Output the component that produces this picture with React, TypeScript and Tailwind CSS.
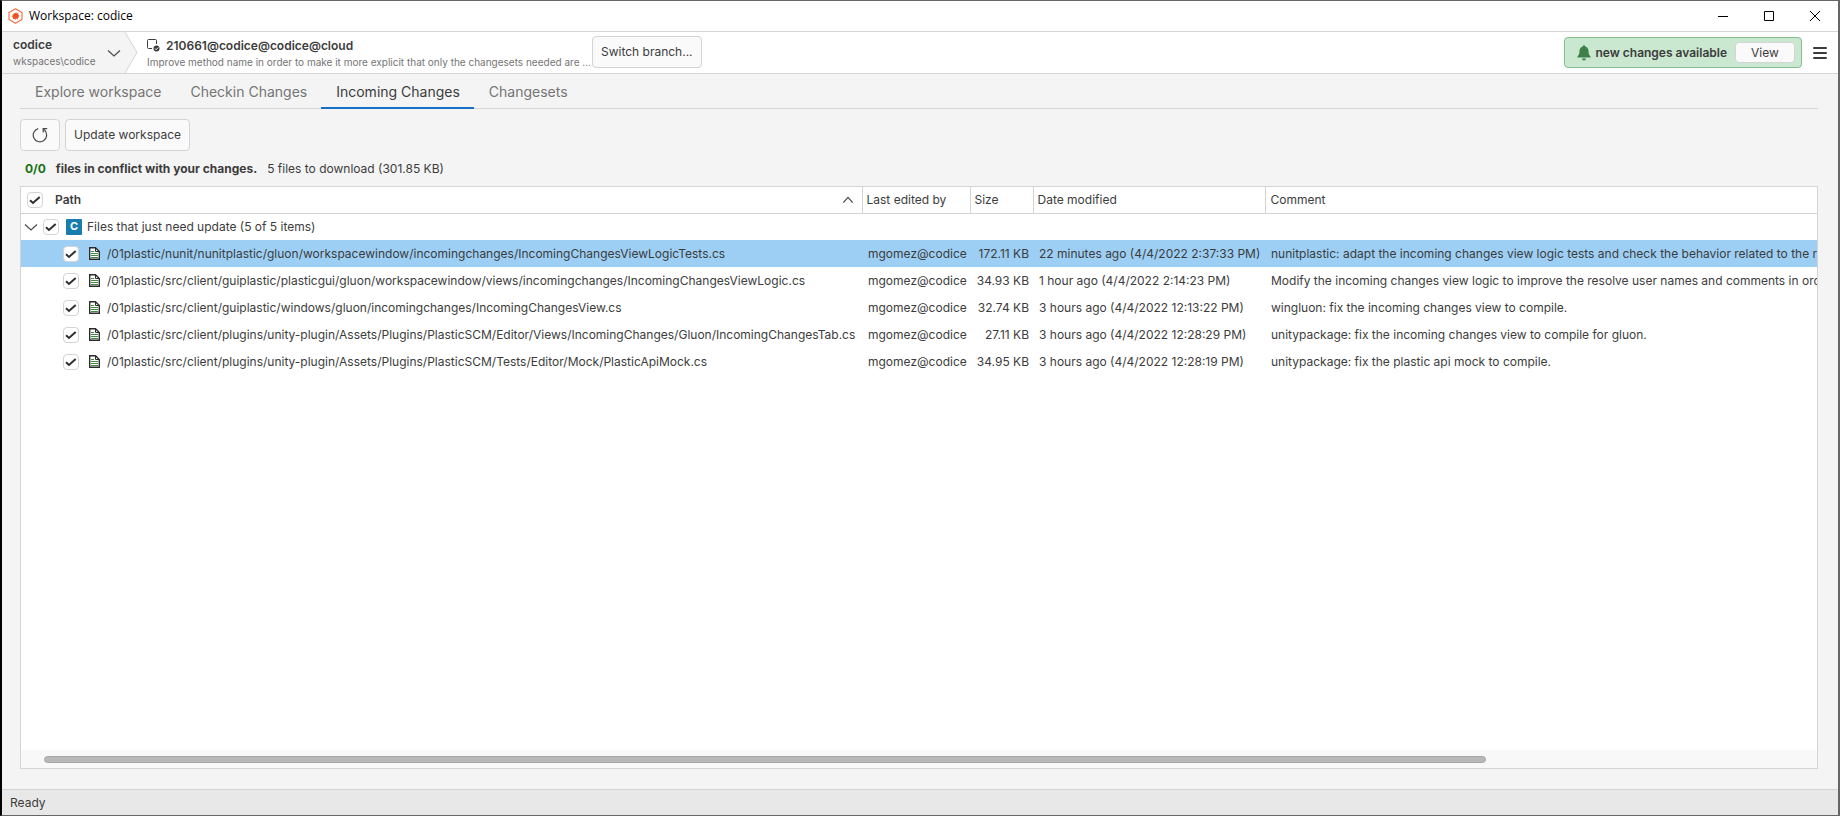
import { ReactNode } from 'react'
import clsx from 'clsx'

const TABS = ['Explore workspace', 'Checkin Changes', 'Incoming Changes', 'Changesets']

const FILES = [
  {
    path: '/01plastic/nunit/nunitplastic/gluon/workspacewindow/incomingchanges/IncomingChangesViewLogicTests.cs',
    author: 'mgomez@codice',
    size: '172.11 KB',
    date: '22 minutes ago (4/4/2022 2:37:33 PM)',
    comment: 'nunitplastic: adapt the incoming changes view logic tests and check the behavior related to the r',
  },
  {
    path: '/01plastic/src/client/guiplastic/plasticgui/gluon/workspacewindow/views/incomingchanges/IncomingChangesViewLogic.cs',
    author: 'mgomez@codice',
    size: '34.93 KB',
    date: '1 hour ago (4/4/2022 2:14:23 PM)',
    comment: 'Modify the incoming changes view logic to improve the resolve user names and comments in ord',
  },
  {
    path: '/01plastic/src/client/guiplastic/windows/gluon/incomingchanges/IncomingChangesView.cs',
    author: 'mgomez@codice',
    size: '32.74 KB',
    date: '3 hours ago (4/4/2022 12:13:22 PM)',
    comment: 'wingluon: fix the incoming changes view to compile.',
  },
  {
    path: '/01plastic/src/client/plugins/unity-plugin/Assets/Plugins/PlasticSCM/Editor/Views/IncomingChanges/Gluon/IncomingChangesTab.cs',
    author: 'mgomez@codice',
    size: '27.11 KB',
    date: '3 hours ago (4/4/2022 12:28:29 PM)',
    comment: 'unitypackage: fix the incoming changes view to compile for gluon.',
  },
  {
    path: '/01plastic/src/client/plugins/unity-plugin/Assets/Plugins/PlasticSCM/Tests/Editor/Mock/PlasticApiMock.cs',
    author: 'mgomez@codice',
    size: '34.95 KB',
    date: '3 hours ago (4/4/2022 12:28:19 PM)',
    comment: 'unitypackage: fix the plastic api mock to compile.',
  },
]

const Logo = () => (
  <svg width="15" height="16" viewBox="0 0 15 16" className="shrink-0">
    <path
      d="M7.5.8l6.500 3.600v7.200L7.500 15.200 1 11.600V4.400z"
      fill="#fff"
      stroke="#f4683f"
      strokeWidth="1.1"
      strokeLinejoin="round"
    />
    <path
      d="M8.200 3.900l.3 1.700 2-.9-.6 1.800 1.700.5-1.300 1 1.100 1.400-1.600.2.2 1.800-1.700-.9-.9 1.400-.8-1.500-1.800.9.3-1.800-1.500-.6 1.300-1-.9-1.400 1.600.1.100-1.700 1.400.7z"
      fill="#f1501f"
    />
  </svg>
)

const Chevron = ({ up = false }: { up?: boolean }) => (
  <svg
    width={up ? 12 : 14}
    height={up ? 12 : 14}
    viewBox="0 0 14 14"
    fill="none"
    stroke="#4a4a4a"
    strokeWidth={up ? 1.5 : 1.2}
    className="shrink-0"
  >
    {up ? <path d="M1.500 10l5.500-6 5.500 6" /> : <path d="M1 4.500l6 5.500 6-5.500" />}
  </svg>
)

const ChangesetIcon = () => (
  <svg width="13" height="13" viewBox="0 0 13 13" fill="none" className="shrink-0">
    <path d="M9.500 5V1.500a1 1 0 0 0-1-1h-7a1 1 0 0 0-1 1v7a1 1 0 0 0 1 1H5" stroke="#3c3c3c" />
    <circle cx="9.500" cy="9.500" r="3" fill="#3c3c3c" />
    <path d="M8 9.500l1.200 1.200 2-2.200" stroke="#fff" />
  </svg>
)

const BellIcon = () => (
  <svg width="14" height="16" viewBox="0 0 14 16" fill="#3f8049" className="shrink-0">
    <path d="M7 .3c.8 0 1.100.5 1.100 1.100 2.200.5 3.300 2.300 3.400 4.400.1 3 .6 4.300 1.900 5.400.5.5.2 1.300-.5 1.300H1.100c-.7 0-1-.8-.5-1.300C1.900 10.100 2.400 8.800 2.500 5.800 2.600 3.700 3.700 1.900 5.900 1.400 5.900.8 6.200.3 7 .3zM5 13.400h4c0 1.200-.9 2-2 2s-2-.8-2-2z" />
  </svg>
)

const RefreshIcon = () => (
  <svg width="16" height="16" viewBox="0 0 16 16" fill="none" stroke="#4a4a4a" strokeWidth="1.200">
    <path d="M6.200 1.600A6.700 6.700 0 1 0 13 3.700" />
    <path d="M11.200 5.500V1.600h4" />
    <path d="M11.200 1.600l2.300 2.600" />
  </svg>
)

const FileIcon = () => (
  <svg width="11" height="13" viewBox="0 0 11 13" fill="none" className="shrink-0">
    <path d="M.7.700h5.800l3.800 3.800v7.800H.700z" fill="#fff" stroke="#2b2b2b" strokeWidth="1.400" />
    <path d="M6.500 1v3.500H10" stroke="#2b2b2b" />
    <path d="M2 4.500h3M2 6.500h7M2 8.500h7M2 10.500h7" stroke="#3f8a43" />
  </svg>
)

const Checkbox = ({ label }: { label: string }) => (
  <span className="inline-grid shrink-0">
    <input
      type="checkbox"
      defaultChecked
      aria-label={label}
      className="peer col-start-1 row-start-1 size-4 appearance-none rounded border border-[#d4d4d4] bg-white"
    />
    <svg
      viewBox="0 0 16 16"
      fill="none"
      stroke="#2f2f2f"
      strokeWidth="2"
      className="pointer-events-none invisible col-start-1 row-start-1 size-4 peer-checked:visible"
    >
      <path d="M3 8.200l3 2.800L12.700 5" />
    </svg>
  </span>
)

const Button = ({ children, className, label }: { children: ReactNode; className: string; label?: string }) => (
  <button
    type="button"
    aria-label={label}
    className={clsx('flex shrink-0 items-center justify-center border border-[#d4d4d4] bg-[#fafafa]', className)}
  >
    {children}
  </button>
)

const TitleBar = () => (
  <div className="flex h-[31px] shrink-0 items-center border-b border-[#d4d4d4] bg-white pl-1.5">
    <Logo />
    <h1 className="ml-1.5 flex-1 font-['Open_Sans',sans-serif] text-xs text-black">Workspace: codice</h1>
    <button type="button" aria-label="Minimize" className="flex w-[46px] justify-center">
      <svg width="10" height="10" stroke="#000">
        <path d="M0 5.500h10" />
      </svg>
    </button>
    <button type="button" aria-label="Maximize" className="flex w-[46px] justify-center">
      <svg width="10" height="10" fill="none" stroke="#000">
        <path d="M.5.500h9v9h-9z" />
      </svg>
    </button>
    <button type="button" aria-label="Close" className="flex w-[46px] justify-center">
      <svg width="10" height="10" stroke="#000">
        <path d="M0 0l10 10M10 0L0 10" />
      </svg>
    </button>
  </div>
)

const WorkspaceHeader = () => (
  <header className="flex h-[42px] shrink-0 border-b border-[#d4d4d4] bg-white">
    <button type="button" className="flex w-[123px] shrink-0 items-center justify-between bg-[#f4f4f4] pr-1 pl-[11px] text-left">
      <span className="flex flex-col">
        <span className="text-xs leading-4 font-semibold">codice</span>
        <span className="text-[10px] leading-4 text-[#757575]">wkspaces\codice</span>
      </span>
      <Chevron />
    </button>
    <svg width="13" height="41" viewBox="0 0 13 41" className="shrink-0">
      <path d="M0 0l12 20.500L0 41z" fill="#f4f4f4" />
      <path d="M0 0l12 20.500L0 41" fill="none" stroke="#d4d4d4" />
    </svg>
    <div className="ml-[9px] flex w-[445px] flex-col justify-center pt-0.5">
      <div className="flex items-center gap-1.5 leading-4">
        <ChangesetIcon />
        <span className="text-xs font-semibold">210661@codice@codice@cloud</span>
      </div>
      <p className="text-[10px] leading-4 whitespace-nowrap text-[#757575]">
        Improve method name in order to make it more explicit that only the changesets needed are ...
      </p>
    </div>
    <Button className="mt-1 h-8 rounded px-2">Switch branch...</Button>
    <div className="mt-[5px] mr-[11px] ml-auto flex h-[31px] items-center rounded border border-[#86bd8f] bg-[#c9e8cf] pr-1.5 pl-3">
      <BellIcon />
      <span className="ml-1 font-semibold">new changes available</span>
      <Button className="ml-2 h-[21px] w-[60px] rounded">View</Button>
    </div>
    <button type="button" aria-label="Menu" className="mr-[11px]">
      <svg width="14" height="12" stroke="#3c3c3c" strokeWidth="2" strokeLinecap="round">
        <path d="M1 1h12M1 6h12M1 11h12" />
      </svg>
    </button>
  </header>
)

const TabBar = () => (
  <nav className="flex h-[35px] shrink-0 border-b border-[#d4d4d4]">
    {TABS.map((tab) => (
      <a
        key={tab}
        href="#"
        className={clsx(
          '-mb-px pt-2 pr-3.5 pl-[15px] text-sm',
          tab === 'Incoming Changes' ? 'border-b-2 border-[#1570c6] text-[#3c3c3c]' : 'text-[#757575]'
        )}
      >
        {tab}
      </a>
    ))}
  </nav>
)

const ChangesTable = () => (
  <div className="flex min-h-0 flex-1 flex-col border border-[#d4d4d4] bg-white">
    <div className="min-h-0 flex-1 overflow-hidden">
      <table className="w-full table-fixed border-collapse text-left whitespace-nowrap">
        <colgroup>
          <col className="w-[841px]" />
          <col className="w-[108px]" />
          <col className="w-[63px]" />
          <col className="w-[232px]" />
          <col />
        </colgroup>
        <thead>
          <tr className="h-[26px] border-b border-[#d4d4d4]">
            <th className="border-r border-[#d4d4d4] p-0 pr-2 pl-1.5 font-semibold">
              <div className="flex items-center">
                <Checkbox label="Select all" />
                <span className="ml-3 flex-1">Path</span>
                <Chevron up />
              </div>
            </th>
            <th className="border-r border-[#d4d4d4] p-0 pl-1 font-normal">Last edited by</th>
            <th className="border-r border-[#d4d4d4] p-0 pl-1 font-normal">Size</th>
            <th className="border-r border-[#d4d4d4] p-0 pl-1 font-normal">Date modified</th>
            <th className="p-0 pl-[5px] font-normal">Comment</th>
          </tr>
        </thead>
        <tbody>
          <tr className="h-[27px]">
            <td colSpan={5} className="p-0 pl-[3px]">
              <div className="flex items-center">
                <button type="button" aria-label="Collapse group" className="mr-[5px]">
                  <Chevron />
                </button>
                <Checkbox label="Select group" />
                <span className="mr-[5px] ml-[7px] flex size-4 items-center justify-center rounded-[1px] bg-[#187cae] text-[11px] font-bold text-white">
                  C
                </span>
                Files that just need update (5 of 5 items)
              </div>
            </td>
          </tr>
          {FILES.map((file, idx) => (
            <tr key={file.path} className={clsx('h-[27px]', idx === 0 && 'bg-[#9dcff5]')}>
              <td className="overflow-hidden p-0 pl-[42px]">
                <div className="flex items-center">
                  <Checkbox label={file.path} />
                  <span className="mr-[7px] ml-2.5">
                    <FileIcon />
                  </span>
                  {file.path}
                </div>
              </td>
              <td className="p-0 pl-1.5">{file.author}</td>
              <td className="p-0 pr-1 text-right">{file.size}</td>
              <td className="p-0 pl-1.5">{file.date}</td>
              <td className="overflow-hidden p-0 pl-1.5">{file.comment}</td>
            </tr>
          ))}
        </tbody>
      </table>
    </div>
    <div className="flex h-[18px] shrink-0 items-center bg-[#f8f8f8] px-[23px]">
      <div className="h-[7px] w-[82.4%] rounded-full border border-[#a6a6a6] bg-[#b8b8b8]" />
    </div>
  </div>
)

export default function App() {
  return (
    <div className="flex h-screen flex-col border border-r-2 border-l-2 border-[#666] border-l-black bg-[#f4f4f4] font-[Inter,sans-serif] text-xs text-[#3c3c3c]">
      <TitleBar />
      <WorkspaceHeader />
      <main className="flex min-h-0 flex-1 flex-col pr-5 pb-5 pl-[18px]">
        <TabBar />
        <div className="mt-2.5 flex shrink-0 gap-[5px]">
          <Button className="h-8 w-10 rounded" label="Refresh">
            <RefreshIcon />
          </Button>
          <Button className="h-8 rounded px-2">Update workspace</Button>
        </div>
        <p className="flex h-[35px] shrink-0 items-center pl-[5px]">
          <span className="font-bold text-[#167016]">0/0</span>
          <span className="ml-2.5 font-bold">files in conflict with your changes.</span>
          <span className="ml-2.5">5 files to download (301.85 KB)</span>
        </p>
        <ChangesTable />
      </main>
      <footer className="flex h-[26px] shrink-0 items-center border-t border-[#d4d4d4] bg-[#e8e8e8] pl-2">Ready</footer>
    </div>
  )
}
